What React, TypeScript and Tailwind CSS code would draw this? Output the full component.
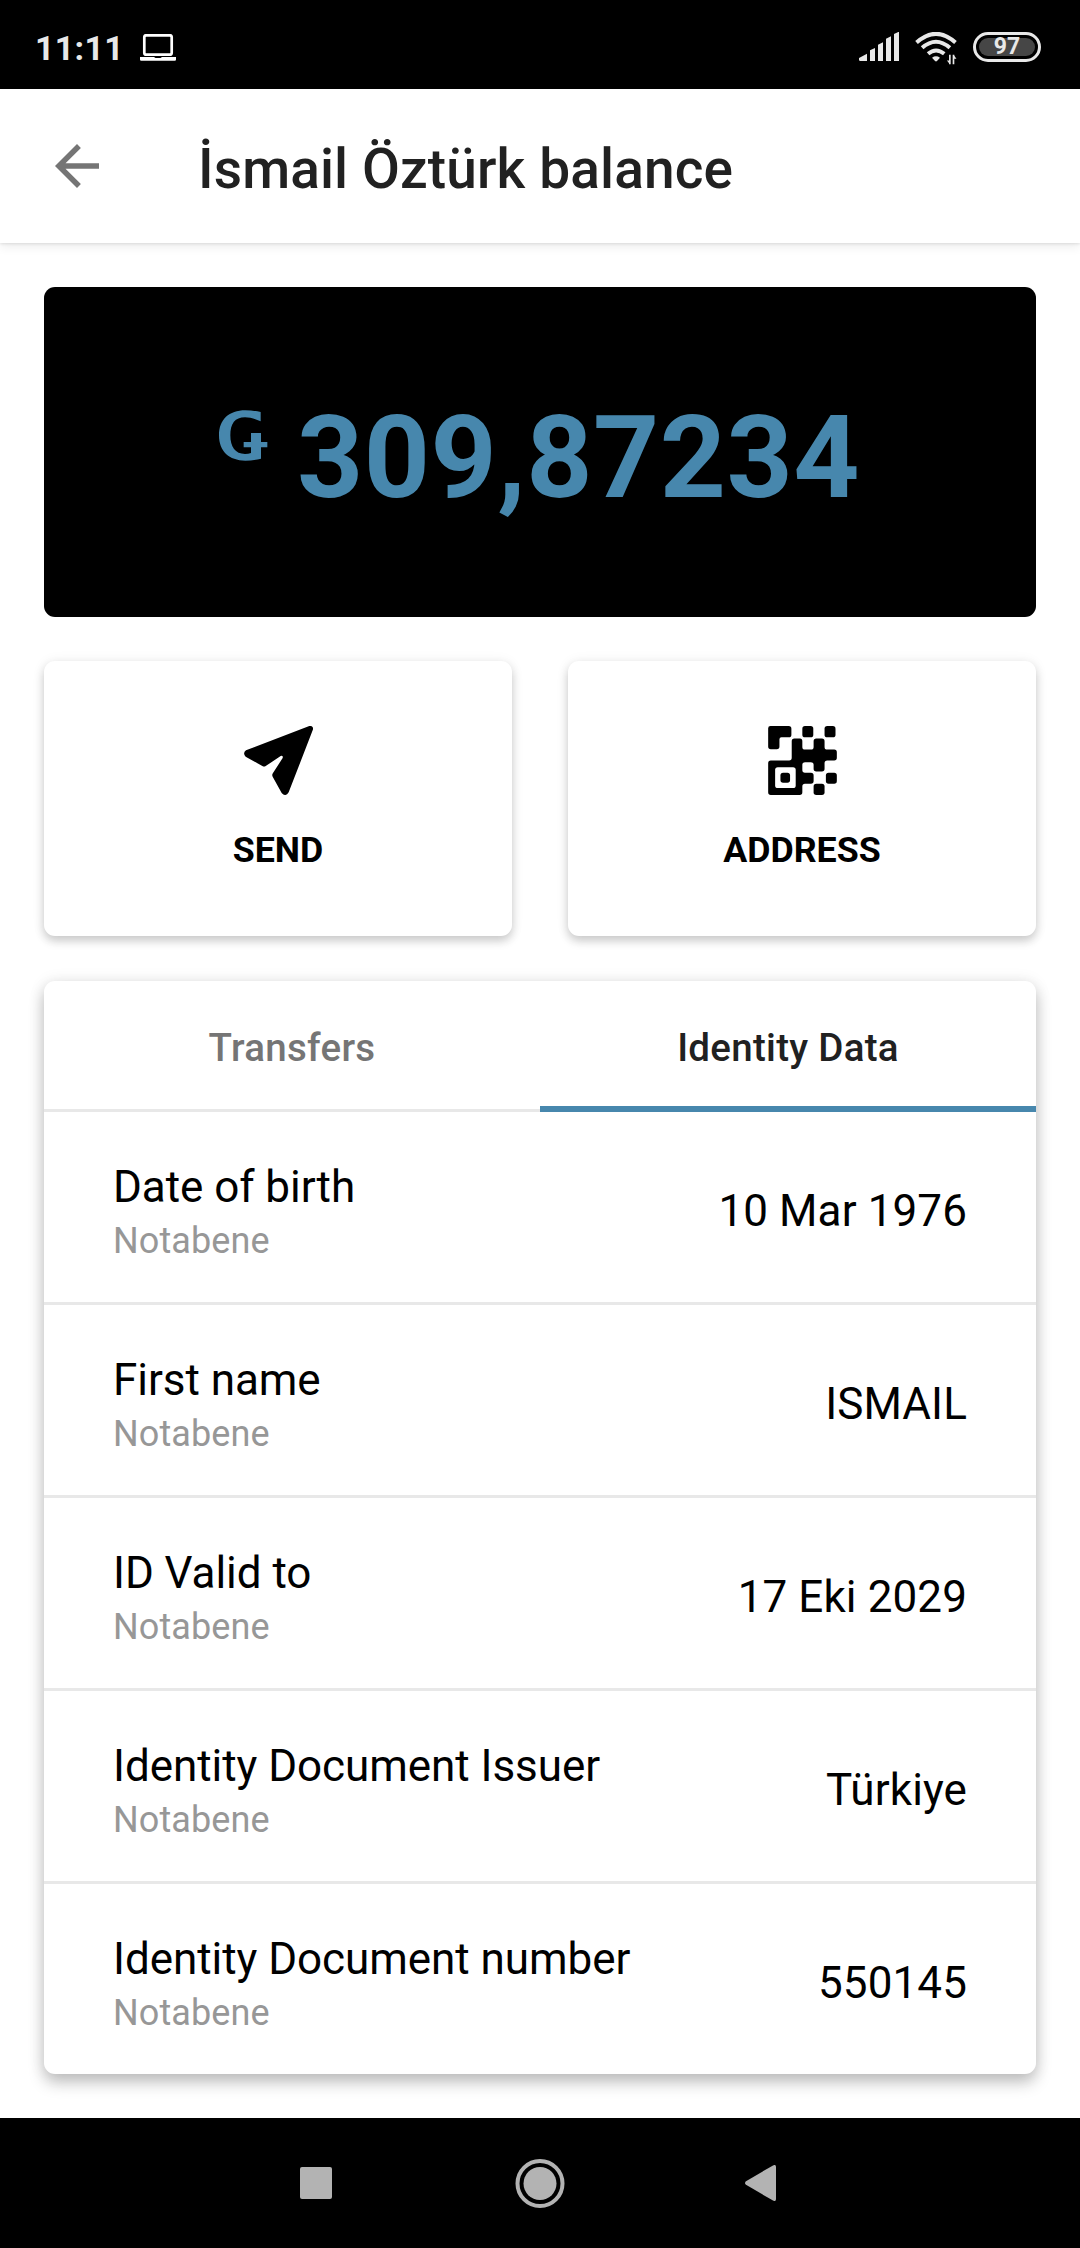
import type { ReactNode } from 'react';

type IdentityItem = { label: string; source: string; value: string };

const items: IdentityItem[] = [
  { label: 'Date of birth', source: 'Notabene', value: '10 Mar 1976' },
  { label: 'First name', source: 'Notabene', value: 'ISMAIL' },
  { label: 'ID Valid to', source: 'Notabene', value: '17 Eki 2029' },
  { label: 'Identity Document Issuer', source: 'Notabene', value: 'Türkiye' },
  { label: 'Identity Document number', source: 'Notabene', value: '550145' },
];

function StatusBar() {
  return (
    <div className="flex h-[89px] items-start bg-black pr-[39px] pl-[35px] text-[#e8e8e8]">
      <span className="mt-7 text-[34px] leading-[41px] font-bold tracking-[0.3px]">11:11</span>
      <svg className="mt-[34px] ml-4" width="36" height="27" viewBox="0 0 36 27" fill="none">
        <rect x="4.3" y="1.3" width="27.4" height="19.4" rx="2" stroke="#fff" strokeWidth="2.7" />
        <path d="M0 23h14l1.500 1h5L22 23h14v2.600a1.200 1.200 0 0 1-1.200 1.200H1.200A1.200 1.200 0 0 1 0 25.600z" fill="#fff" />
      </svg>
      <div className="ml-auto flex items-start gap-4 pt-8">
        <svg width="40" height="29" viewBox="117 96 120 87" fill="currentColor">
          <path d="M117 174l24-13v22h-20q-4 0-4-4zM150 151l15-7v39h-15zM174 134l15-7v56h-15zM198 116l15-7v74h-15zM222 102l15-7v88h-15z" />
        </svg>
        <svg width="42" height="33" viewBox="285 96 126 100" fill="none" stroke="currentColor">
          <path d="M289 128Q348 75 407 128" strokeWidth="12" />
          <path d="M306 144Q348 107 390 144" strokeWidth="12" />
          <path d="M324 162Q348 142 373 162" strokeWidth="12" />
          <path d="M336 174q12-9 24 0l-9 10q-3 3-6 0z" fill="currentColor" stroke="none" />
          <path d="M390 194v-29M401 165v29" strokeWidth="5" />
          <path d="M381 182h9v12zM410 177h-9v-12z" fill="currentColor" stroke="none" />
        </svg>
        <div className="flex h-[30px] w-[68px] rounded-full border-[3px] border-[#e8e8e8] p-[3px]">
          <div className="flex flex-1 items-center justify-center rounded-full bg-[#464646] text-[23px] leading-[18px] font-bold">
            97
          </div>
        </div>
      </div>
    </div>
  );
}

function Header() {
  return (
    <header className="flex h-[154px] items-center bg-white pl-11 shadow-[0_1px_3px_rgba(0,0,0,0.10),0_4px_10px_rgba(0,0,0,0.07)]">
      <svg width="66" height="66" viewBox="0 0 24 24" fill="#757575">
        <path d="M20 11H7.830l5.590-5.590L12 4l-8 8 8 8 1.410-1.410L7.830 13H20v-2z" />
      </svg>
      <h1 className="ml-[88px] pt-[6px] text-[55px] leading-[64px] font-medium tracking-[0.13px] text-[#212121]">
        İsmail Öztürk balance
      </h1>
    </header>
  );
}

function Balance() {
  return (
    <section className="flex h-[330px] items-start rounded-[11px] bg-black pl-[175px] text-[#4787ad]">
      <svg className="mt-[123px]" width="49" height="51" viewBox="117 119 147 153" fill="currentColor" role="img" aria-label="Currency">
        <path d="M242 125v28C225 145 210 141 195 141C165 141 151 160 151 195C151 230 166 251 195 251Q205 251 213 248V231H191V215H213V188H243V215H262V231H243V265C228 269 212 271 196 271C147 271 117 243 117 195C117 148 147 120 196 120C213 120 228 122 242 125Z" />
      </svg>
      <span className="mt-[103px] ml-[29px] text-[115.5px] leading-[136px] font-bold tracking-[0.5px]">309,87234</span>
    </section>
  );
}

function ActionCard({ label, children }: { label: string; children: ReactNode }) {
  return (
    <button className="flex h-[275px] flex-1 flex-col items-center gap-[34px] rounded-[11px] bg-white pt-[65px] shadow-[0_5px_10px_rgba(0,0,0,0.18),0_1px_14px_rgba(0,0,0,0.07)]">
      {children}
      <span className="text-[35.75px] leading-[42px] font-bold text-black">{label}</span>
    </button>
  );
}

function SendIcon() {
  return (
    <svg width="69" height="69" viewBox="132 258 207 207" fill="#000">
      <path d="M326 259C335 255 342 262 338 271L266 457Q257 472 245 459L218 410Q215 404 219 399L248 354Q250 346 242 348L196 379Q192 381 187 378L137 350Q127 340 138 331Z" />
    </svg>
  );
}

function QrIcon() {
  return (
    <svg width="69" height="69" viewBox="264 107 207 208" fill="#000">
      <path d="M271 107H326Q334 107 334 115V133Q334 141 326 141H304Q298 141 298 147V169Q298 177 290 177H272Q264 177 264 169V114Q264 107 271 107Z" />
      <rect x="367" y="107" width="33" height="34" rx="8" />
      <rect x="434" y="107" width="33" height="34" rx="8" />
      <path d="M343 145H360Q367 145 367 153V170Q367 178 375 178H393Q401 178 401 170V153Q401 145 409 145H426Q434 145 434 153V170Q434 178 442 178H463Q471 178 471 186V203Q471 211 463 211H442Q434 211 434 219V236Q434 244 426 244H409Q401 244 401 236V224Q401 216 393 216H375Q367 216 367 224V240Q367 248 375 248H393Q401 248 401 256V273Q401 281 393 281H375Q367 281 367 289V307Q367 315 359 315H272Q264 315 264 307V219Q264 211 272 211H327Q335 211 335 203V153Q335 145 343 145Z" />
      <rect x="285" y="231" width="62" height="63" rx="8" fill="#fff" />
      <rect x="301" y="248" width="29" height="30" rx="8" />
      <rect x="438" y="248" width="33" height="33" rx="8" />
      <rect x="401" y="281" width="33" height="34" rx="8" />
    </svg>
  );
}

function IdentityRow({ label, source, value }: IdentityItem) {
  return (
    <li className="flex h-[193px] items-start justify-between border-b-[3px] border-[#e8e8e8] px-[69px] last:h-[190px] last:border-b-0">
      <div className="pt-[46px]">
        <div className="text-[44px] leading-[58px] tracking-[-0.05px] text-black">{label}</div>
        <div className="text-[36px] leading-[50px] tracking-[0.1px] text-[#979797]">{source}</div>
      </div>
      <div className="pt-[73px] text-[44px] leading-[52px] tracking-[0.1px] text-black">{value}</div>
    </li>
  );
}

function IdentityCard() {
  return (
    <section className="rounded-[11px] bg-white shadow-[0_9px_16px_rgba(0,0,0,0.22),0_1px_16px_rgba(0,0,0,0.10)]">
      <div className="flex h-[131px] text-[38.5px] leading-[46px] font-medium tracking-[0.28px]">
        <button className="flex flex-1 justify-center border-b-[3px] border-[#e8e8e8] pt-11 text-[#757575]">Transfers</button>
        <button className="flex flex-1 justify-center border-b-[6px] border-[#4787ad] pt-11 text-[#212121]">Identity Data</button>
      </div>
      <ul>
        {items.map((item) => (
          <IdentityRow key={item.label} {...item} />
        ))}
      </ul>
    </section>
  );
}

function NavigationBar() {
  return (
    <nav className="relative flex h-[130px] items-center bg-black pl-[300px] text-[#b3b3b3]">
      <div className="size-8 rounded-[2px] bg-[#b3b3b3]" />
      <svg className="ml-[183px]" width="50" height="50" viewBox="0 0 50 50" fill="none">
        <circle cx="25" cy="25.500" r="22.500" stroke="currentColor" strokeWidth="4" />
        <circle cx="25" cy="25.500" r="16.500" fill="currentColor" />
      </svg>
      <svg className="ml-[180px]" width="31" height="36" viewBox="0 0 31 36" fill="currentColor">
        <path d="M28 .4Q31-1 31 2V34Q31 37 28 35.600L1 19.800Q-1 18 1 16.200Z" />
      </svg>
    </nav>
  );
}

export default function App() {
  return (
    <div className="flex h-[2248px] w-[1080px] flex-col overflow-hidden bg-white font-['Roboto',sans-serif]">
      <StatusBar />
      <Header />
      <main className="flex flex-1 flex-col px-11 pt-11">
        <Balance />
        <div className="mt-11 mb-[45px] flex gap-14">
          <ActionCard label="SEND">
            <SendIcon />
          </ActionCard>
          <ActionCard label="ADDRESS">
            <QrIcon />
          </ActionCard>
        </div>
        <IdentityCard />
      </main>
      <NavigationBar />
    </div>
  );
}
